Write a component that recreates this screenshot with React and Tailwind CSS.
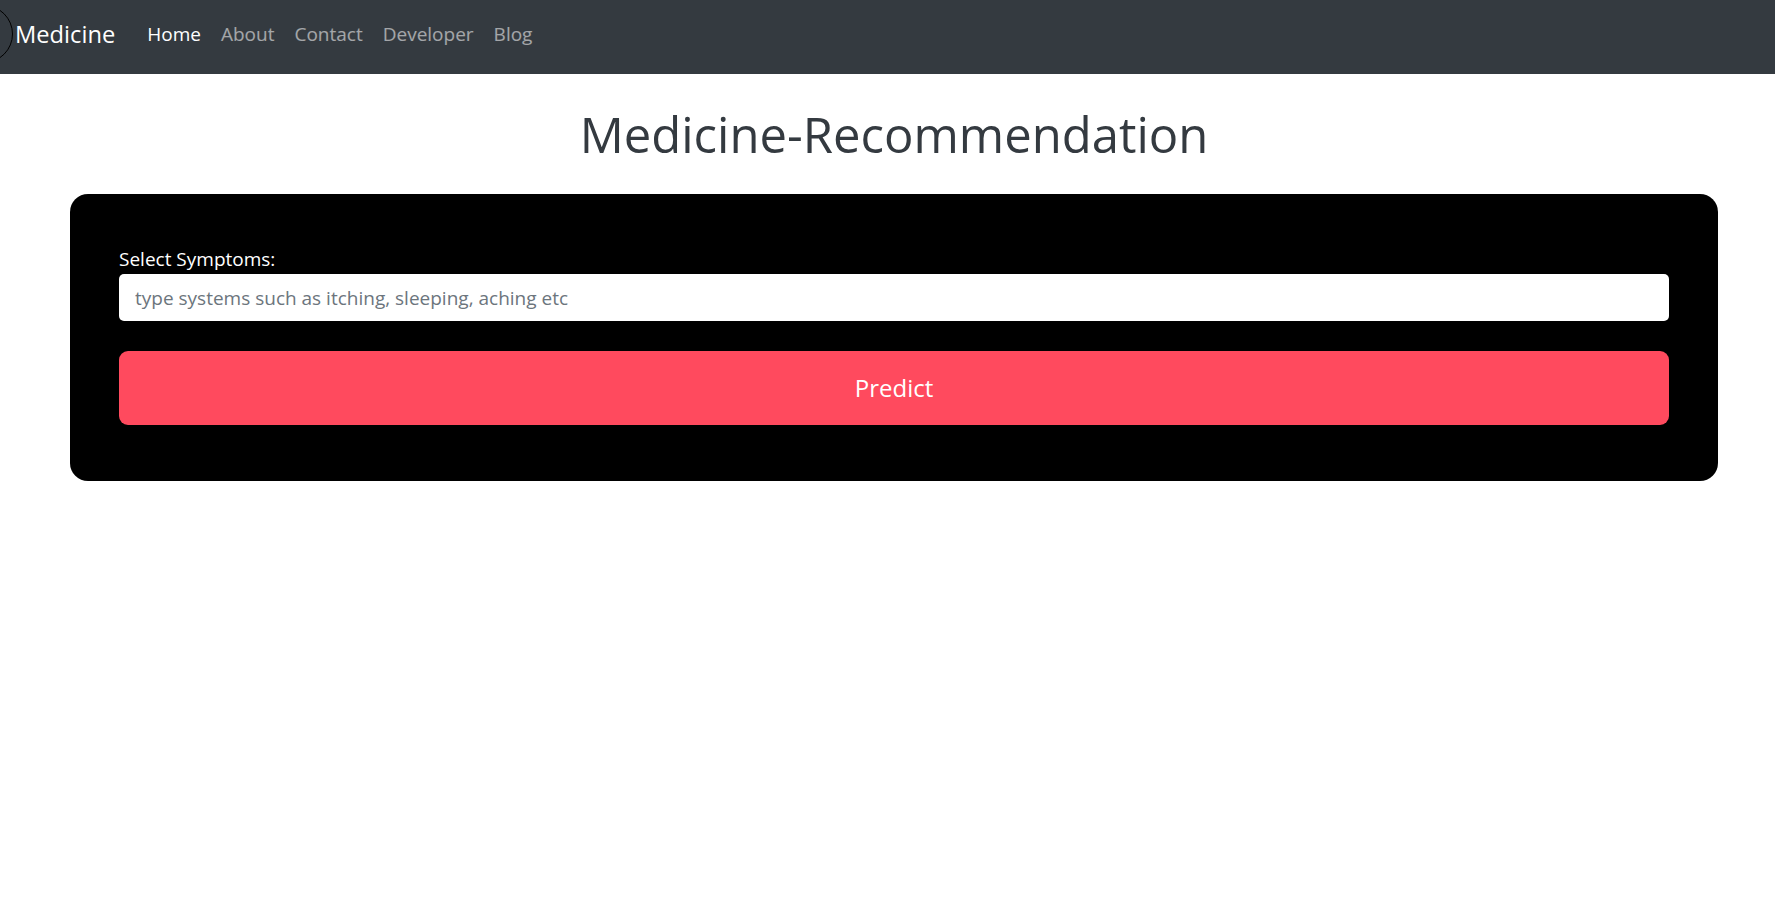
import React from "react";

const links = ["Home", "About", "Contact", "Developer", "Blog"];

function Navbar() {
  return (
    <nav className="h-[74px] bg-[#343a40] flex items-center pb-[7px] overflow-hidden">
      {/* broken logo image: only the round border shows */}
      <div className="shrink-0 w-[58px] h-[58px] -ml-[45px] rounded-full border-[1.5px] border-black" />
      <a className="ml-[2px] text-[23.7px] leading-[36px] text-white">Medicine</a>
      <ul className="ml-[22px] flex items-center">
        {links.map((l, i) => (
          <li key={l}>
            <a className={`block px-[10px] text-[19px] leading-[30px] ${i === 0 ? "text-white" : "text-white/55"}`}>
              {l}
            </a>
          </li>
        ))}
      </ul>
    </nav>
  );
}

export default function App() {
  return (
    <div className="min-h-screen bg-white" style={{ fontFamily: '"Open Sans", "Noto Sans", sans-serif' }}>
      <Navbar />
      <main className="ml-[70px] mr-[57px]">
        <h1 className="mt-[30px] text-center text-[49px] leading-[60px] font-normal text-[#343a40]">
          Medicine-Recommendation
        </h1>
        <form
          className="mt-[30px] bg-black rounded-[18px] pt-[50px] pb-[56px] px-[49px]"
          onSubmit={(e) => e.preventDefault()}
        >
          <label className="block text-[19px] leading-[30px] text-white">Select Symptoms:</label>
          <input
            type="text"
            placeholder="type systems such as itching, sleeping, aching etc"
            className="block w-full h-[47px] rounded-[5px] bg-white px-[16px] text-[19px] text-[#212529] placeholder:text-[#6c757d] outline-none"
          />
          <button
            type="submit"
            className="mt-[30px] w-full h-[74px] rounded-[9px] bg-[#ff4a5e] text-white text-[24px]"
          >
            Predict
          </button>
        </form>
      </main>
    </div>
  );
}
